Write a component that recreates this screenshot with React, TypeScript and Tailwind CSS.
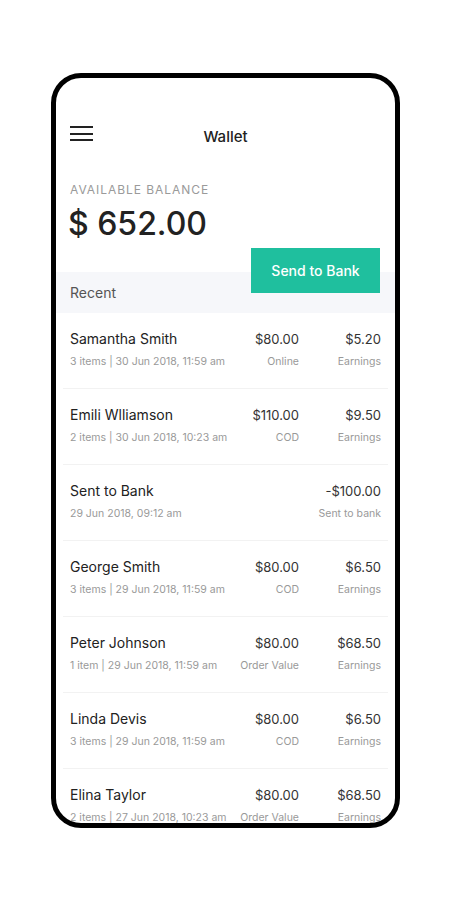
import { Fragment } from 'react'

type Txn = {
  name: string
  sub: string
  amount?: string
  amountLabel?: string
  value: string
  valueLabel: string
}

const TXNS: Txn[] = [
  { name: 'Samantha Smith', sub: '3 items | 30 Jun 2018, 11:59 am', amount: '$80.00', amountLabel: 'Online', value: '$5.20', valueLabel: 'Earnings' },
  { name: 'Emili Wlliamson', sub: '2 items | 30 Jun 2018, 10:23 am', amount: '$110.00', amountLabel: 'COD', value: '$9.50', valueLabel: 'Earnings' },
  { name: 'Sent to Bank', sub: '29 Jun 2018, 09:12 am', value: '-$100.00', valueLabel: 'Sent to bank' },
  { name: 'George Smith', sub: '3 items | 29 Jun 2018, 11:59 am', amount: '$80.00', amountLabel: 'COD', value: '$6.50', valueLabel: 'Earnings' },
  { name: 'Peter Johnson', sub: '1 item | 29 Jun 2018, 11:59 am', amount: '$80.00', amountLabel: 'Order Value', value: '$68.50', valueLabel: 'Earnings' },
  { name: 'Linda Devis', sub: '3 items | 29 Jun 2018, 11:59 am', amount: '$80.00', amountLabel: 'COD', value: '$6.50', valueLabel: 'Earnings' },
  { name: 'Elina Taylor', sub: '2 items | 27 Jun 2018, 10:23 am', amount: '$80.00', amountLabel: 'Order Value', value: '$68.50', valueLabel: 'Earnings' },
]

export default function App() {
  return (
    <div className="min-h-[900px] w-[450px] bg-white pt-[73px] pl-[51px] font-['Inter',sans-serif]">
      <div className="w-[349px] h-[755px] border-[5px] border-black rounded-[30px] overflow-hidden bg-white">
        {/* header */}
        <div className="grid grid-cols-[1fr_auto_1fr] items-start px-[14px] pt-[48px]">
          <div className="flex flex-col gap-[4.5px]">
            <span className="block w-[23px] h-[2px] bg-[#222]" />
            <span className="block w-[23px] h-[2px] bg-[#222]" />
            <span className="block w-[23px] h-[2px] bg-[#222]" />
          </div>
          <h1 className="text-[15px] leading-[22px] font-medium text-[#222]">Wallet</h1>
          <div />
        </div>

        {/* balance */}
        <div className="px-[14px] mt-[34px]">
          <p className="text-[12px] leading-[16px] tracking-[0.08em] text-[#9a9a9a]">AVAILABLE BALANCE</p>
          <p className="mt-[6px] text-[32px] leading-[40px] font-medium text-[#222] -ml-[2px]">$ 652.00</p>
          <div className="flex justify-end mt-[4px] pr-[1px]">
            <button className="relative z-10 w-[129px] h-[45px] bg-[#1fbf9e] text-white text-[14px] font-medium">
              Send to Bank
            </button>
          </div>
        </div>

        <div className="-mt-[21px] h-[41px] bg-[#f6f7fa] flex items-end px-[14px] pb-[11px]">
          <span className="text-[14px] leading-[18px] text-[#555]">Recent</span>
        </div>

        {/* list */}
        <div>
          {TXNS.map(t => (
            <Fragment key={t.name}>
              <div className="flex px-[14px] pt-[17px] pb-[19px]">
                <div className="flex-1 min-w-0">
                  <p className="text-[14px] leading-[18px] text-[#222]">{t.name}</p>
                  <p className="mt-[7px] text-[10.5px] leading-[14px] text-[#999] whitespace-nowrap">{t.sub}</p>
                </div>
                {t.amount && (
                  <div className="w-[80px] text-right">
                    <p className="text-[13px] leading-[18px] text-[#333]">{t.amount}</p>
                    <p className="mt-[7px] text-[10.5px] leading-[14px] text-[#999]">{t.amountLabel}</p>
                  </div>
                )}
                <div className="w-[82px] text-right">
                  <p className="text-[13px] leading-[18px] text-[#333]">{t.value}</p>
                  <p className="mt-[7px] text-[10.5px] leading-[14px] text-[#999] whitespace-nowrap">{t.valueLabel}</p>
                </div>
              </div>
              <div className="mx-[7px] h-px bg-[#f2f2f2]" />
            </Fragment>
          ))}
        </div>
      </div>
    </div>
  )
}
